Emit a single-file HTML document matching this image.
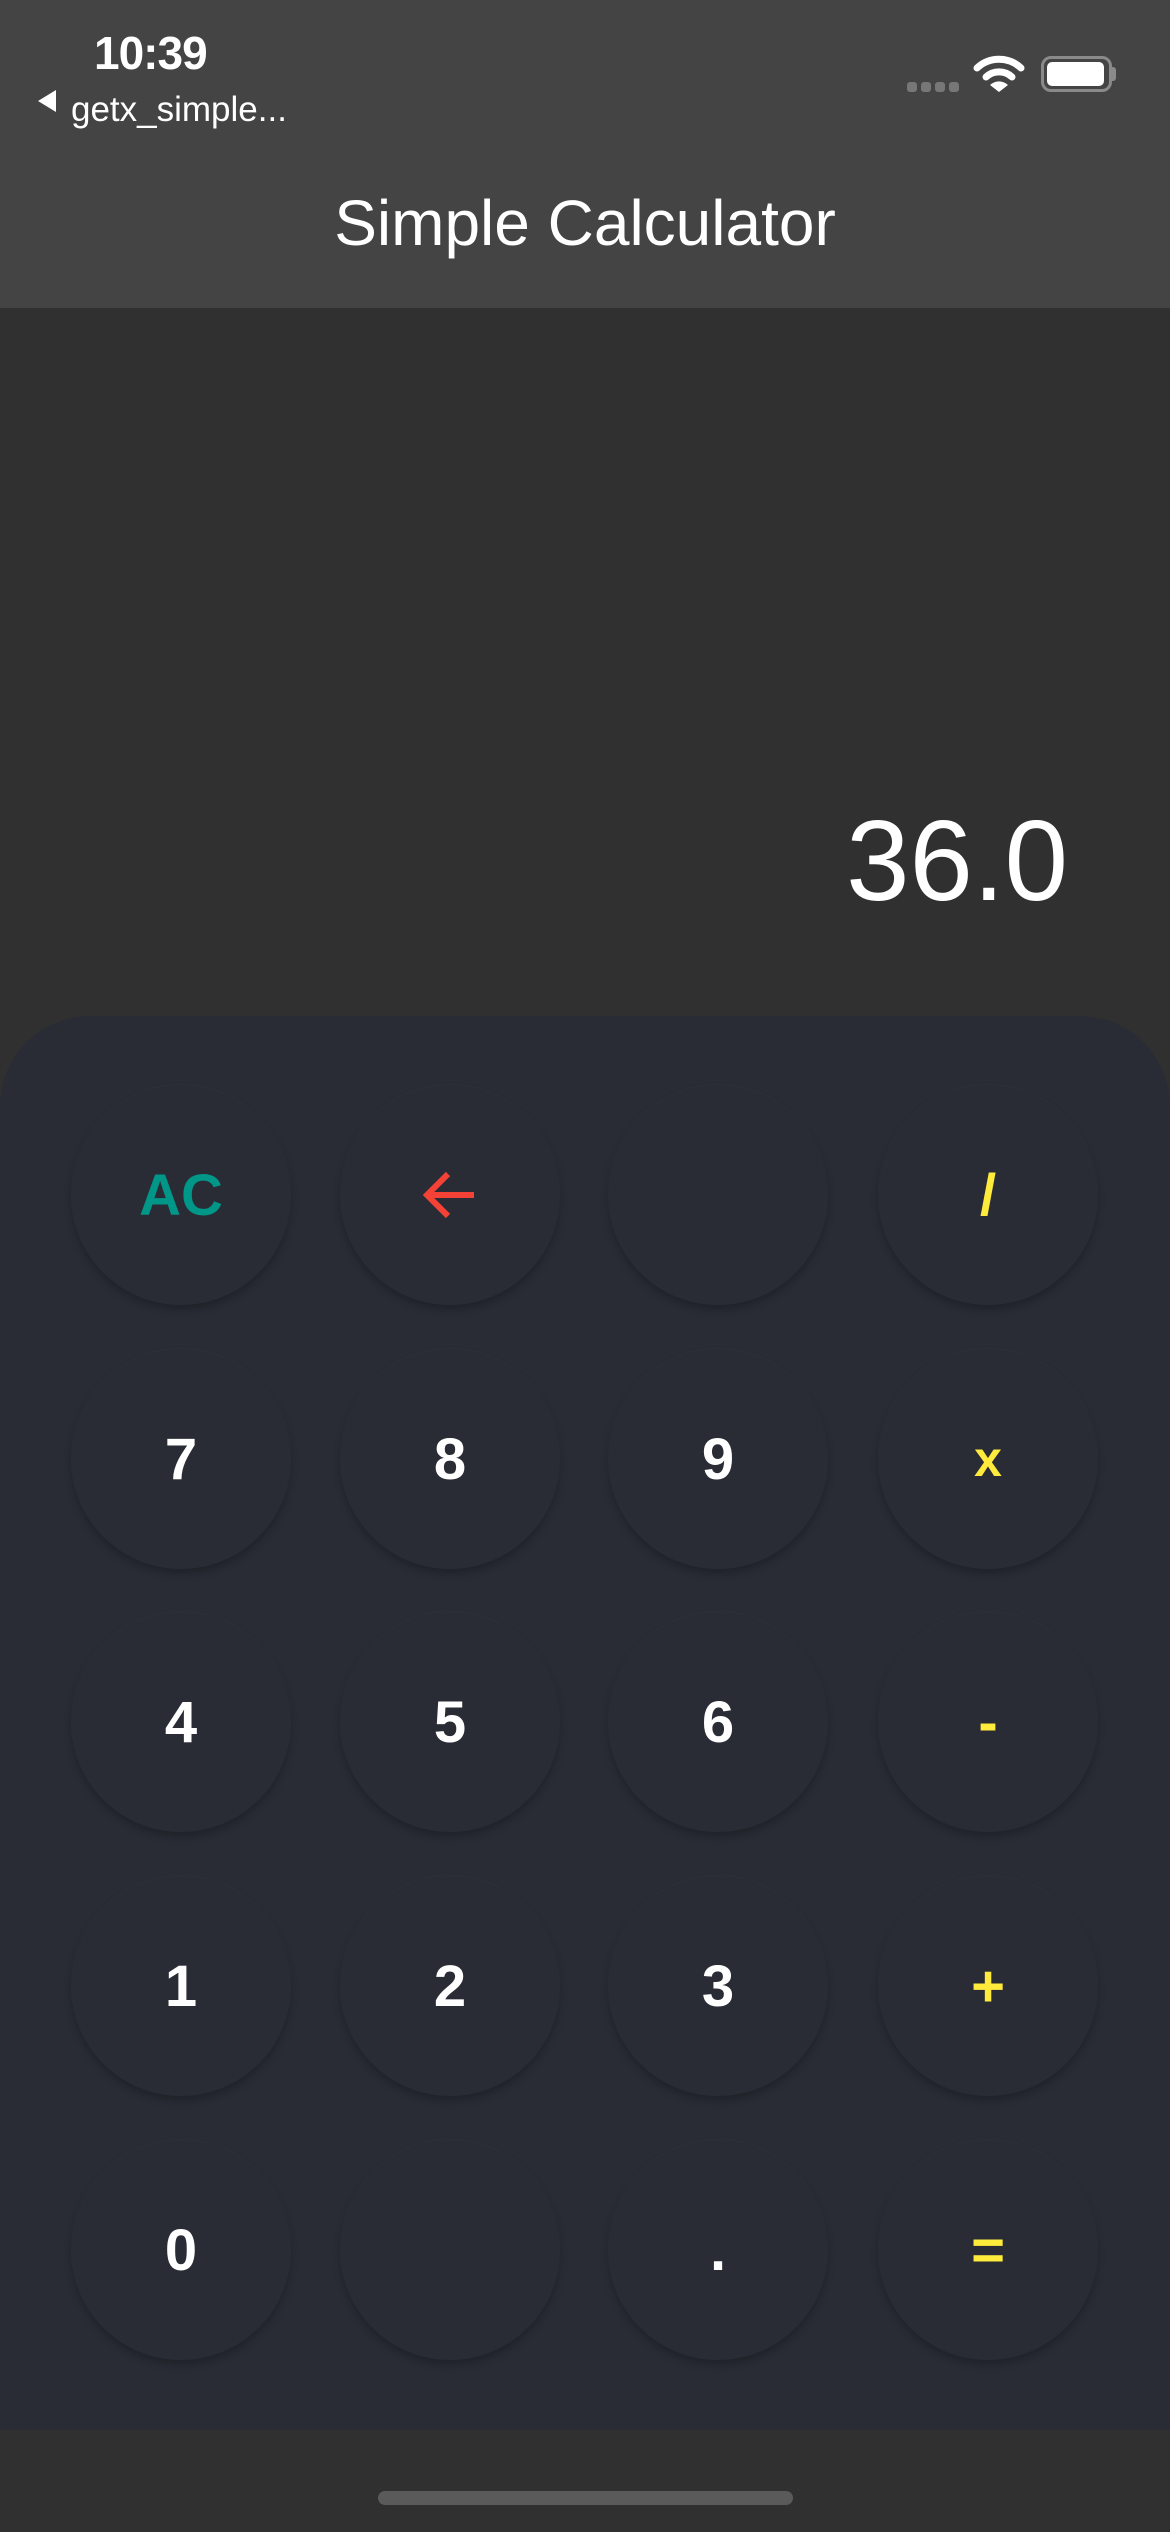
<!DOCTYPE html>
<html><head><meta charset="utf-8"><style>
html,body{margin:0;padding:0;}
body{width:1170px;height:2532px;background:#303030;position:relative;overflow:hidden;font-family:"Liberation Sans",sans-serif;}
.hdr{position:absolute;left:0;top:0;width:1170px;height:308px;background:#444444;}
.t{position:absolute;color:#fff;white-space:nowrap;}
.panel{position:absolute;left:0;top:1016px;width:1170px;height:1414px;background:#292c35;border-radius:90px 90px 0 0;}
.b{position:absolute;width:220px;height:220px;border-radius:50%;background:#292c35;box-shadow:0 5px 8px rgba(0,0,0,0.22),0 -1px 2px rgba(255,255,255,0.03);display:flex;align-items:center;justify-content:center;font-weight:bold;font-size:58px;color:#fff;}
.y{color:#ffeb3b}
</style></head><body>
<div class="hdr"></div>
<div class="t" style="left:94px;top:26px;font-size:46px;font-weight:bold;letter-spacing:-1px;">10:39</div>
<div class="t" style="left:38px;top:90px;width:0;height:0;border-top:11px solid transparent;border-bottom:11px solid transparent;border-right:18px solid #fff;"></div>
<div class="t" style="left:71px;top:90px;font-size:35px;">getx_simple...</div>
<div class="t" style="left:907px;top:82px;">
<span style="position:absolute;left:0;width:10px;height:10px;border-radius:3px;background:#777"></span>
<span style="position:absolute;left:14px;width:10px;height:10px;border-radius:3px;background:#777"></span>
<span style="position:absolute;left:28px;width:10px;height:10px;border-radius:3px;background:#777"></span>
<span style="position:absolute;left:42px;width:10px;height:10px;border-radius:3px;background:#777"></span>
</div>
<svg class="t" style="left:973px;top:54px" width="52" height="40" viewBox="0 0 52 40">
<path d="M4 14 A32 32 0 0 1 48 14" stroke="#fff" stroke-width="7" fill="none" stroke-linecap="round"/>
<path d="M13 23 A19 19 0 0 1 39 23" stroke="#fff" stroke-width="7" fill="none" stroke-linecap="round"/>
<path d="M17 31 L26 38 L35 31 A13 13 0 0 0 17 31Z" fill="#fff"/>
</svg>
<div class="t" style="left:1041px;top:56px;width:65px;height:30px;border:3px solid #8a8a8a;border-radius:10px;"></div>
<div class="t" style="left:1047px;top:62px;width:57px;height:24px;background:#fff;border-radius:5px;"></div>
<div class="t" style="left:1112px;top:67px;width:4px;height:14px;background:#8a8a8a;border-radius:0 3px 3px 0;"></div>
<div class="t" style="left:0;width:1170px;text-align:center;top:186px;font-size:64px;">Simple Calculator</div>
<div class="t" style="right:102px;top:796px;font-size:114px;">36.0</div>
<div class="panel"></div>
<div class="b" style="left:71px;top:1085px;color:#009688;">AC</div>
<div class="b" style="left:340px;top:1085px;"><svg width="60" height="50" viewBox="0 0 60 50"><path d="M54 25H8M28 4L7 25L28 46" stroke="#f44336" stroke-width="6" fill="none"/></svg></div>
<div class="b" style="left:608px;top:1085px;"></div>
<div class="b y" style="left:878px;top:1085px;">/</div>
<div class="b" style="left:71px;top:1349px;">7</div>
<div class="b" style="left:340px;top:1349px;">8</div>
<div class="b" style="left:608px;top:1349px;">9</div>
<div class="b y" style="left:878px;top:1349px;font-size:50px;">x</div>
<div class="b" style="left:71px;top:1612px;">4</div>
<div class="b" style="left:340px;top:1612px;">5</div>
<div class="b" style="left:608px;top:1612px;">6</div>
<div class="b y" style="left:878px;top:1612px;">-</div>
<div class="b" style="left:71px;top:1876px;">1</div>
<div class="b" style="left:340px;top:1876px;">2</div>
<div class="b" style="left:608px;top:1876px;">3</div>
<div class="b y" style="left:878px;top:1876px;">+</div>
<div class="b" style="left:71px;top:2140px;">0</div>
<div class="b" style="left:340px;top:2140px;"></div>
<div class="b" style="left:608px;top:2140px;">.</div>
<div class="b y" style="left:878px;top:2140px;">=</div>
<div class="t" style="left:378px;top:2491px;width:415px;height:14px;border-radius:7px;background:#5a5a5a;"></div>
</body></html>
